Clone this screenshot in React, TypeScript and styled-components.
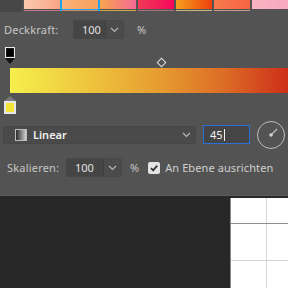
import React from "react";
import styled, { createGlobalStyle } from "styled-components";

const GlobalStyle = createGlobalStyle`
  html, body { margin: 0; padding: 0; background: #282828; }
  body { font-family: "Noto Sans", "Open Sans", sans-serif; }
`;

const Screen = styled.div`
  width: 288px;
  height: 288px;
  overflow: hidden;
  display: flex;
  flex-direction: column;
  background: #282828;
`;

const Panel = styled.div`
  height: 195px;
  background: #535353;
  border-bottom: 1px solid #5c5c5c;
  display: flex;
  flex-direction: column;
  flex-shrink: 0;
  color: #cfcfcf;
  font-size: 11px;
`;

const SwatchRow = styled.div`
  display: flex;
  gap: 2px;
  height: 12px;
`;

const SwatchGap = styled.div`
  width: 27px;
  background: #474747;
`;

const Swatch = styled.div<{ $fill: string; $line: string; $selected?: boolean }>`
  width: 36px;
  display: flex;
  flex-direction: column;
  gap: 1px;
  flex-shrink: 0;

  &::before {
    content: "";
    height: 9px;
    background: ${(p) => p.$fill};
    box-shadow: ${(p) => (p.$selected ? "0 0 0 2px #1ea2ea" : "none")};
  }
  &::after {
    content: "";
    height: 1px;
    background: ${(p) => p.$line};
  }
`;

const Row = styled.div<{ $top: number; $left: number }>`
  display: flex;
  align-items: center;
  margin-top: ${(p) => p.$top}px;
  padding-left: ${(p) => p.$left}px;
  height: 19px;
`;

const Label = styled.span<{ $width: number }>`
  width: ${(p) => p.$width}px;
  color: #c6c6c6;
  letter-spacing: 0.2px;
`;

const Spin = styled.div`
  display: flex;
  height: 19px;
  border: 1px solid #484848;
  border-radius: 2px;
  box-sizing: border-box;
`;

const SpinValue = styled.div<{ $width: number }>`
  width: ${(p) => p.$width}px;
  background: #454545;
  color: #e2e2e2;
  display: flex;
  align-items: center;
  padding-left: 8px;
  box-sizing: border-box;
`;

const SpinButton = styled.div`
  width: 17px;
  background: #4b4b4b;
  border-left: 1px solid #404040;
  display: flex;
  align-items: center;
  justify-content: center;
`;

const Unit = styled.span<{ $gap: number }>`
  margin-left: ${(p) => p.$gap}px;
  color: #c6c6c6;
`;

const Editor = styled.div`
  position: relative;
  height: 70px;
  margin-top: 6px;
`;

const Bar = styled.div`
  position: absolute;
  left: 10px;
  right: 0;
  top: 23px;
  height: 25px;
  background: linear-gradient(90deg, #f6ef4c 0%, #eec23c 30%, #e69a30 55%, #dc6a26 78%, #cd2f18 100%);
`;

const StopTop = styled.div`
  position: absolute;
  left: 5px;
  top: 2px;
  width: 10px;
  height: 11px;
  box-sizing: border-box;
  border: 1px solid #e8e8e8;
  background: #000;
  box-shadow: inset 0 0 0 1px #1a1a1a;

  &::after {
    content: "";
    position: absolute;
    left: -1px;
    top: 10px;
    border-left: 5px solid transparent;
    border-right: 5px solid transparent;
    border-top: 6px solid #111;
  }
`;

const StopBottom = styled.div`
  position: absolute;
  left: 4px;
  top: 56px;
  width: 12px;
  height: 13px;
  box-sizing: border-box;
  border: 2px solid #e8e8e8;
  background: #f4e43a;

  &::before {
    content: "";
    position: absolute;
    left: -2px;
    top: -7px;
    border-left: 6px solid transparent;
    border-right: 6px solid transparent;
    border-bottom: 5px solid #7a7a7a;
  }
`;

const Midpoint = styled.div`
  position: absolute;
  left: 158px;
  top: 14px;
  width: 5px;
  height: 5px;
  border: 1px solid #e0e0e0;
  transform: rotate(45deg);
`;

const Select = styled.div`
  width: 193px;
  height: 18px;
  box-sizing: border-box;
  background: #4a4a4a;
  border: 1px solid #464646;
  border-radius: 2px;
  display: flex;
  align-items: center;
  padding-left: 11px;
  padding-right: 4px;
  color: #f0f0f0;
`;

const GradientIcon = styled.div`
  width: 12px;
  height: 12px;
  box-sizing: border-box;
  border: 1px solid #bdbdbd;
  background: linear-gradient(90deg, #2a2a2a, #cfcfcf);
  margin-right: 6px;
`;

const SelectText = styled.span`
  flex: 1;
  font-weight: 600;
`;

const AngleInput = styled.div`
  margin-left: 7px;
  width: 47px;
  height: 19px;
  box-sizing: border-box;
  border: 1px solid #2c6fd8;
  background: #454545;
  color: #f0f0f0;
  display: flex;
  align-items: center;
  padding-left: 6px;
`;

const Caret = styled.span`
  width: 1px;
  height: 12px;
  background: #f0f0f0;
  margin-left: 1px;
`;

const Dial = styled.svg`
  margin-left: 6px;
`;

const Check = styled.div`
  margin-left: 9px;
  width: 12px;
  height: 12px;
  border-radius: 2px;
  background: #e4e4e4;
  display: flex;
  align-items: center;
  justify-content: center;
`;

const CheckLabel = styled.span`
  margin-left: 5px;
  color: #d0d0d0;
  letter-spacing: 0.1px;
`;

const Workspace = styled.div`
  flex: 1;
  display: flex;
  justify-content: flex-end;
  padding-top: 2px;
`;

const Canvas = styled.div`
  width: 57px;
  background: #fff;
  border-left: 1px solid #8a8a8a;
  display: flex;
  flex-direction: column;
`;

const CanvasStrip = styled.div`
  height: 25px;
  border-bottom: 1px solid #8f8f8f;
  background: linear-gradient(90deg, transparent 35px, #d8d8d8 35px, #d8d8d8 36px, transparent 36px);
`;

const CanvasBody = styled.div`
  flex: 1;
  background:
    linear-gradient(180deg, transparent 36px, #d4d4d4 36px, #d4d4d4 37px, transparent 37px),
    linear-gradient(90deg, transparent 35px, #d8d8d8 35px, #d8d8d8 36px, transparent 36px);
`;

const Chevron = () => (
  <svg width="9" height="6" viewBox="0 0 9 6">
    <path d="M1 1 L4.5 4.5 L8 1" fill="none" stroke="#b8b8b8" strokeWidth="1.1" />
  </svg>
);

const swatches = [
  { fill: "linear-gradient(90deg, #fbc9ae, #f8a585)", line: "#c77486" },
  { fill: "linear-gradient(90deg, #f9b27a, #f8a05c)", line: "#cf8a62", selected: true },
  { fill: "linear-gradient(90deg, #f8a44e, #f56a96)", line: "#c9ab48" },
  { fill: "linear-gradient(90deg, #f03a56, #f5085a)", line: "#a57476" },
  { fill: "linear-gradient(90deg, #f4a01e, #f0400c)", line: "#c6b987" },
  { fill: "linear-gradient(90deg, #f87a4e, #f86440)", line: "#c69a88" },
  { fill: "linear-gradient(90deg, #f9b4c0, #f8a8c0)", line: "#535353" },
];

export default function App() {
  return (
    <Screen>
      <GlobalStyle />
      <Panel>
        <SwatchRow>
          <SwatchGap />
          {swatches.map((s, i) => (
            <Swatch key={i} $fill={s.fill} $line={s.line} $selected={s.selected} />
          ))}
        </SwatchRow>

        <Row $top={8} $left={4}>
          <Label $width={69}>Deckkraft:</Label>
          <Spin>
            <SpinValue $width={31}>100</SpinValue>
            <SpinButton>
              <Chevron />
            </SpinButton>
          </Spin>
          <Unit $gap={13}>%</Unit>
        </Row>

        <Editor>
          <StopTop />
          <Midpoint />
          <Bar />
          <StopBottom />
        </Editor>

        <Row $top={10} $left={3}>
          <Select>
            <GradientIcon />
            <SelectText>Linear</SelectText>
            <Chevron />
          </Select>
          <AngleInput>
            45
            <Caret />
          </AngleInput>
          <Dial width="30" height="30" viewBox="0 0 30 30">
            <circle cx="15" cy="15" r="13.5" fill="none" stroke="#bdbdbd" strokeWidth="1" />
            <line x1="15" y1="15" x2="21" y2="9" stroke="#bdbdbd" strokeWidth="1.2" />
            <circle cx="15" cy="15" r="1.8" fill="#cfcfcf" />
          </Dial>
        </Row>

        <Row $top={14} $left={7}>
          <Label $width={59}>Skalieren:</Label>
          <Spin>
            <SpinValue $width={36}>100</SpinValue>
            <SpinButton>
              <Chevron />
            </SpinButton>
          </Spin>
          <Unit $gap={8}>%</Unit>
          <Check>
            <svg width="10" height="10" viewBox="0 0 10 10">
              <path d="M2 5.2 L4.2 7.4 L8.2 2.6" fill="none" stroke="#333" strokeWidth="1.8" />
            </svg>
          </Check>
          <CheckLabel>An Ebene ausrichten</CheckLabel>
        </Row>
      </Panel>

      <Workspace>
        <Canvas>
          <CanvasStrip />
          <CanvasBody />
        </Canvas>
      </Workspace>
    </Screen>
  );
}
